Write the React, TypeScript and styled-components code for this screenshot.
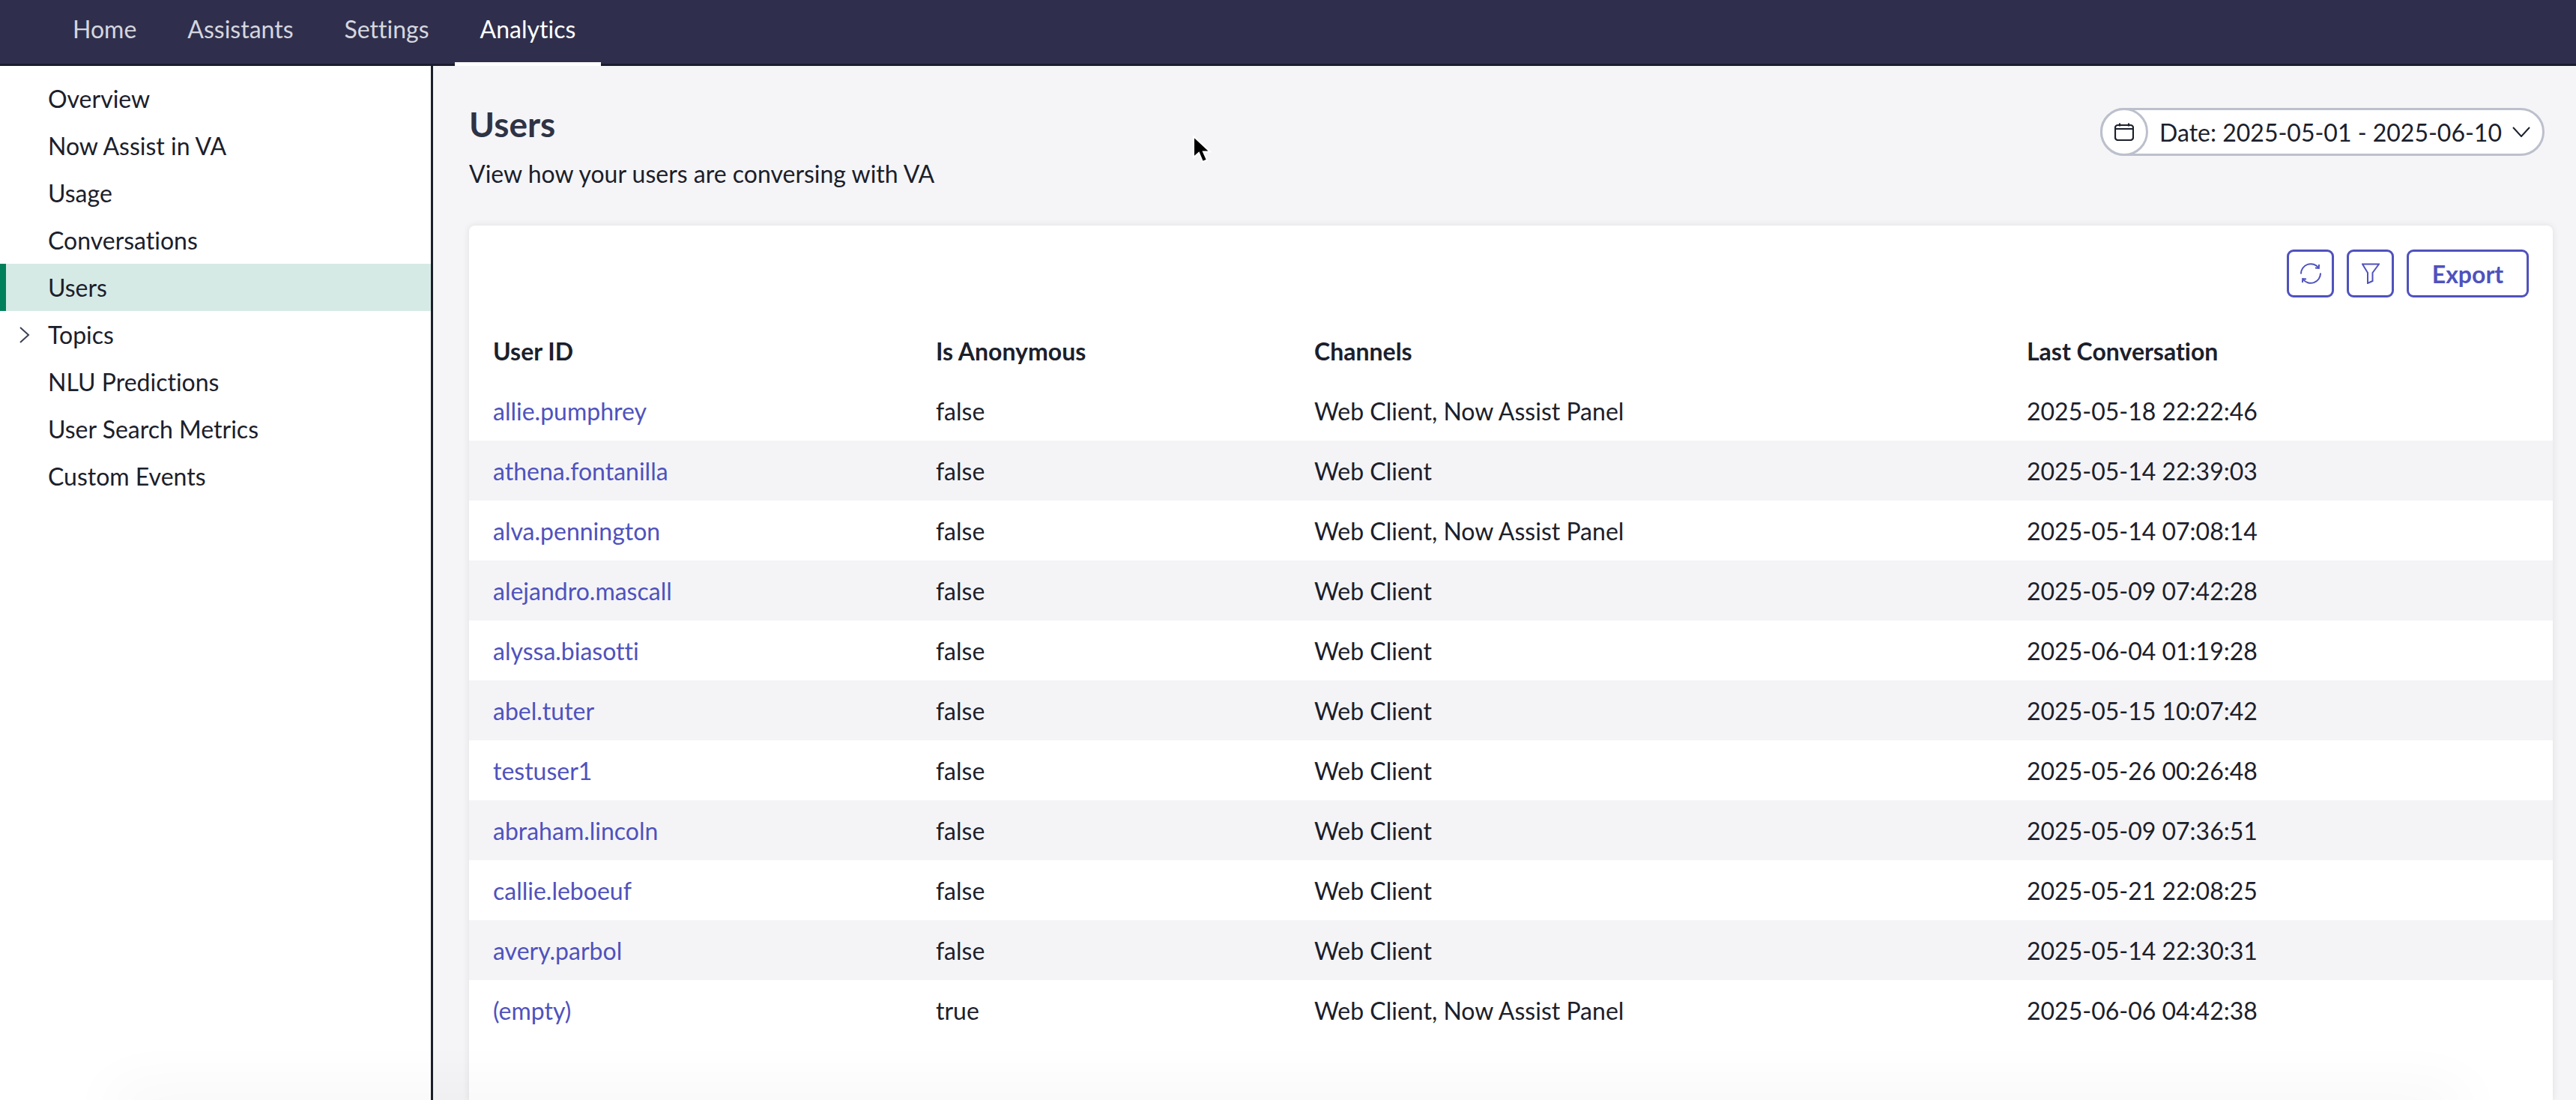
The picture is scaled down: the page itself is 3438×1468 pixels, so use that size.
import React from 'react';
import styled, { createGlobalStyle } from 'styled-components';

const GlobalStyle = createGlobalStyle`
  html, body {
    margin: 0;
    height: 100%;
    overflow: hidden;
    background: #f5f5f7;
  }
  body {
    font-family: Lato, "Liberation Sans", sans-serif;
    font-variant-ligatures: none;
    color: #1b202b;
  }
`;

const Shell = styled.div`
  position: relative;
  display: flex;
  flex-direction: column;
  height: 100vh;
  overflow: hidden;
`;

const TopBar = styled.nav`
  flex: none;
  display: flex;
  height: 88px;
  box-sizing: border-box;
  padding-left: 63px;
  background: #2f2f4d;
  border-bottom: 3px solid #1c1c30;
`;

const Tab = styled.a<{ $active?: boolean }>`
  display: flex;
  align-items: center;
  height: 88px;
  box-sizing: border-box;
  padding: 0 34px 6px;
  font-size: 32px;
  color: ${(p) => (p.$active ? '#ffffff' : '#d6d6de')};
  border-bottom: 5px solid ${(p) => (p.$active ? '#ffffff' : 'transparent')};
`;

const Body = styled.div`
  flex: 1;
  display: flex;
  min-height: 0;
`;

const SideNav = styled.aside`
  flex: none;
  width: 578px;
  box-sizing: border-box;
  padding-top: 12px;
  background: #ffffff;
  border-right: 3px solid #1b202b;
`;

const SideItem = styled.div<{ $selected?: boolean }>`
  position: relative;
  display: flex;
  align-items: center;
  height: 63px;
  box-sizing: border-box;
  padding-left: 64px;
  font-size: 32px;
  background: ${(p) => (p.$selected ? '#d6eae5' : 'transparent')};
  box-shadow: ${(p) => (p.$selected ? 'inset 8px 0 0 #00805a' : 'none')};
`;

const Caret = styled.svg`
  position: absolute;
  left: 25px;
  width: 16px;
  height: 24px;
  fill: none;
  stroke: #3c4254;
  stroke-width: 2;
`;

const Main = styled.main`
  flex: 1;
  min-width: 0;
  display: flex;
  flex-direction: column;
  box-sizing: border-box;
  padding: 50px 31px 0 48px;
`;

const PageHead = styled.header`
  flex: none;
  display: flex;
  justify-content: space-between;
  align-items: flex-start;
  margin-bottom: 49px;
`;

const Title = styled.h1`
  margin: 0 0 18px;
  font-size: 46px;
  line-height: 56px;
  font-weight: 700;
  color: #2e3345;
`;

const Subtitle = styled.p`
  margin: 0;
  font-size: 32px;
  line-height: 40px;
`;

const DatePill = styled.button`
  display: flex;
  align-items: center;
  height: 64px;
  margin: 6px 11px 0 0;
  padding: 0 16px 0 0;
  font: inherit;
  font-size: 32px;
  color: #1b202b;
  background: #ffffff;
  border: 3px solid #bcc0cc;
  border-radius: 32px;
`;

const DateIcon = styled.span`
  display: flex;
  align-items: center;
  justify-content: center;
  width: 64px;
  height: 64px;
  margin: 0 15px 0 -3px;
  box-sizing: border-box;
  border: 3px solid #bcc0cc;
  border-radius: 50%;
  background: #ffffff;
`;

const DateChevron = styled.svg`
  width: 24px;
  height: 14px;
  margin-left: 14px;
  fill: none;
  stroke: #1b202b;
  stroke-width: 2;
`;

const Card = styled.section`
  flex: 1;
  min-height: 0;
  background: #ffffff;
  border-radius: 8px 8px 0 0;
  box-shadow: 0 0 10px rgba(30, 30, 60, 0.1);
`;

const Toolbar = styled.div`
  display: flex;
  justify-content: flex-end;
  gap: 17px;
  padding: 32px 32px 31px 0;
`;

const ToolButton = styled.button<{ $wide?: boolean }>`
  display: flex;
  align-items: center;
  justify-content: center;
  width: ${(p) => (p.$wide ? '163px' : '63px')};
  height: 64px;
  padding: 0;
  font: inherit;
  font-size: 32px;
  font-weight: 700;
  color: #4f52bd;
  background: #ffffff;
  border: 3px solid #4f52bd;
  border-radius: 9px;
`;

const ToolIcon = styled.svg`
  fill: none;
  stroke: #4f52bd;
  stroke-width: 2;
`;

const Row = styled.div<{ $striped?: boolean; $head?: boolean }>`
  display: grid;
  grid-template-columns: 591px 505px 951px 1fr;
  align-items: center;
  height: 80px;
  padding-left: 32px;
  font-size: 32px;
  font-weight: ${(p) => (p.$head ? 700 : 400)};
  background: ${(p) => (p.$striped ? '#f4f4f7' : 'transparent')};
`;

const UserLink = styled.a`
  color: #4f52bd;
`;

const BottomFade = styled.div`
  position: absolute;
  left: 160px;
  right: 160px;
  bottom: -20px;
  height: 20px;
  pointer-events: none;
  box-shadow: 0 0 80px 10px rgba(0, 0, 0, 0.055);
`;

const Pointer = styled.svg`
  position: absolute;
  left: 1591px;
  top: 180px;
  width: 26px;
  height: 38px;
`;

const tabs = ['Home', 'Assistants', 'Settings', 'Analytics'];
const sideItems = [
  'Overview',
  'Now Assist in VA',
  'Usage',
  'Conversations',
  'Users',
  'Topics',
  'NLU Predictions',
  'User Search Metrics',
  'Custom Events',
];

const both = 'Web Client, Now Assist Panel';
const web = 'Web Client';
const users = [
  ['allie.pumphrey', 'false', both, '2025-05-18 22:22:46'],
  ['athena.fontanilla', 'false', web, '2025-05-14 22:39:03'],
  ['alva.pennington', 'false', both, '2025-05-14 07:08:14'],
  ['alejandro.mascall', 'false', web, '2025-05-09 07:42:28'],
  ['alyssa.biasotti', 'false', web, '2025-06-04 01:19:28'],
  ['abel.tuter', 'false', web, '2025-05-15 10:07:42'],
  ['testuser1', 'false', web, '2025-05-26 00:26:48'],
  ['abraham.lincoln', 'false', web, '2025-05-09 07:36:51'],
  ['callie.leboeuf', 'false', web, '2025-05-21 22:08:25'],
  ['avery.parbol', 'false', web, '2025-05-14 22:30:31'],
  ['(empty)', 'true', both, '2025-06-06 04:42:38'],
];

export default function App(): JSX.Element {
  return (
    <Shell>
      <GlobalStyle />
      <TopBar>
        {tabs.map((t) => (
          <Tab key={t} $active={t === 'Analytics'}>
            {t}
          </Tab>
        ))}
      </TopBar>
      <Body>
        <SideNav>
          {sideItems.map((item) => (
            <SideItem key={item} $selected={item === 'Users'}>
              {item === 'Topics' && (
                <Caret viewBox="0 0 16 24">
                  <polyline points="2,2 13,12 2,22" />
                </Caret>
              )}
              {item}
            </SideItem>
          ))}
        </SideNav>
        <Main>
          <PageHead>
            <div>
              <Title>Users</Title>
              <Subtitle>View how your users are conversing with VA</Subtitle>
            </div>
            <DatePill>
              <DateIcon>
                <svg width="26" height="24" viewBox="0 0 26 24" fill="none" stroke="#1b202b" strokeWidth="2.2">
                  <rect x="1" y="3" width="24" height="20" rx="3.5" />
                  <path d="M1 8h24M7 0.5v4M19 0.5v4" />
                </svg>
              </DateIcon>
              Date: 2025-05-01 - 2025-06-10
              <DateChevron viewBox="0 0 24 14">
                <polyline points="1,1 12,13 23,1" />
              </DateChevron>
            </DatePill>
          </PageHead>
          <Card>
            <Toolbar>
              <ToolButton>
                <ToolIcon width="28" height="28" viewBox="0 0 28 28">
                  <path d="M1 14.5A13 13 0 0 1 24.5 6.5" />
                  <path d="M27 13.5A13 13 0 0 1 3.5 21.5" />
                  <path d="M25 2 24.8 7 20 6.6" />
                  <path d="M3 26 3.2 21 8 21.4" />
                </ToolIcon>
              </ToolButton>
              <ToolButton>
                <ToolIcon width="24" height="28" viewBox="0 0 24 28">
                  <path d="M1 1.5H23L14.5 13V24L8 27V13Z" />
                </ToolIcon>
              </ToolButton>
              <ToolButton $wide>Export</ToolButton>
            </Toolbar>
            <Row $head>
              <span>User ID</span>
              <span>Is Anonymous</span>
              <span>Channels</span>
              <span>Last Conversation</span>
            </Row>
            {users.map(([id, anon, channels, last], i) => (
              <Row key={id} $striped={i % 2 === 1}>
                <UserLink>{id}</UserLink>
                <span>{anon}</span>
                <span>{channels}</span>
                <span>{last}</span>
              </Row>
            ))}
          </Card>
        </Main>
      </Body>
      <BottomFade />
      <Pointer viewBox="0 0 26 38">
        <path d="M2 2V30L9 24L14 36L20 33.5L15 22.5H24Z" fill="#000000" stroke="#ffffff" strokeWidth="2" />
      </Pointer>
    </Shell>
  );
}
